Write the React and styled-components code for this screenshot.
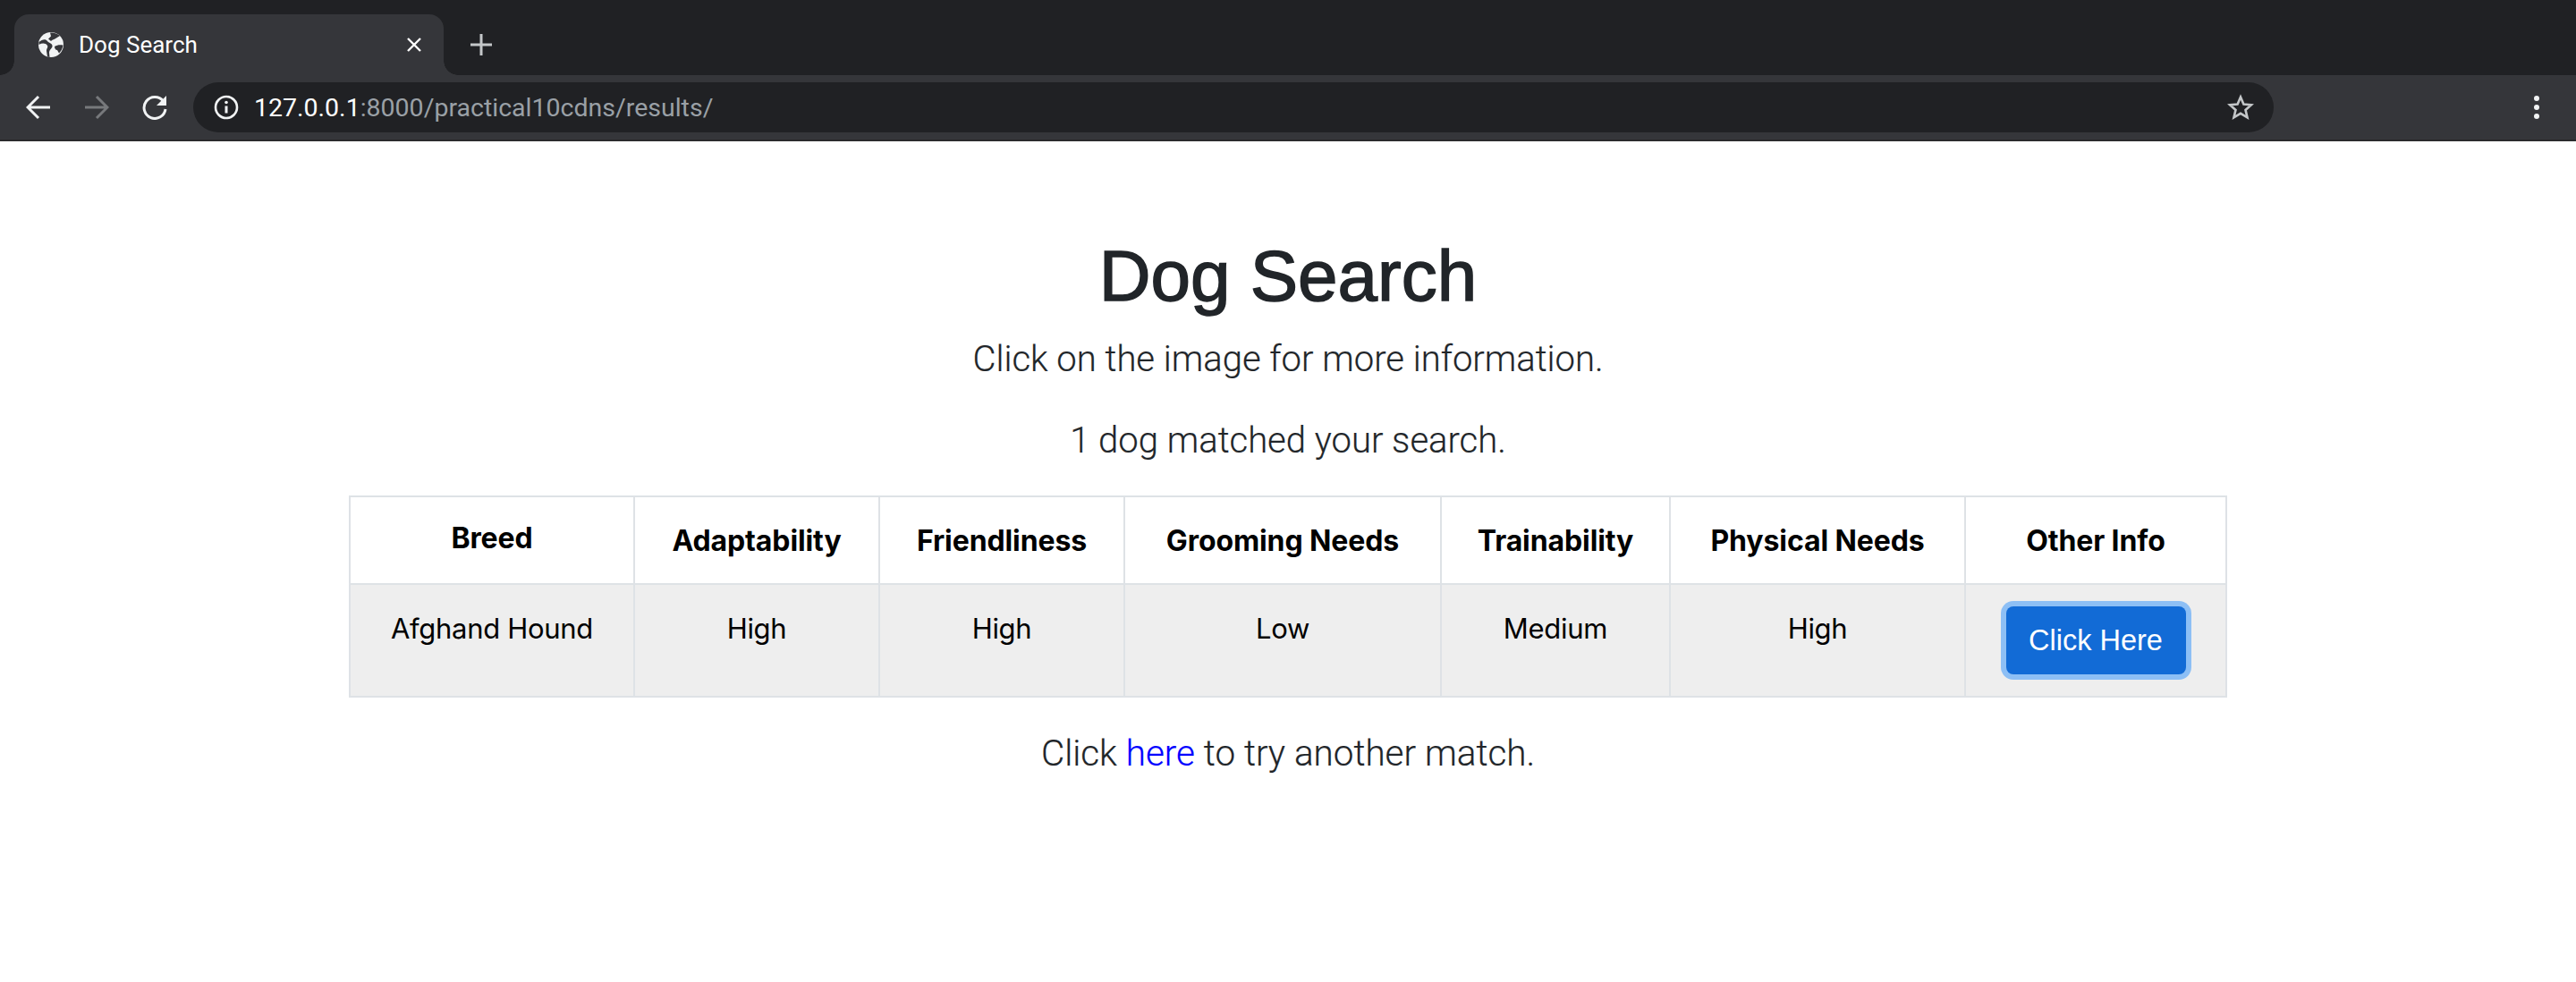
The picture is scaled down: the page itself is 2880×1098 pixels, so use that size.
import React from 'react';
import styled, { createGlobalStyle } from 'styled-components';

const GlobalStyle = createGlobalStyle`
    html, body {
        margin: 0;
        padding: 0;
        background: #fff;
        font-family: "Liberation Sans", Arial, sans-serif;
    }
`;

const columns = [
    { label: 'Breed', value: 'Afghand Hound', width: 318, raised: true },
    { label: 'Adaptability', value: 'High', width: 274 },
    { label: 'Friendliness', value: 'High', width: 274 },
    { label: 'Grooming Needs', value: 'Low', width: 354 },
    { label: 'Trainability', value: 'Medium', width: 256 },
    { label: 'Physical Needs', value: 'High', width: 330 },
    { label: 'Other Info', width: 292 },
];

const App = () => {
    return (
        <>
            <GlobalStyle />
            <Browser>
                <TabStrip>
                    <Tab>
                        <svg width="30" height="30" viewBox="0 0 30 30">
                            <circle cx="15" cy="15" r="14" fill="#f1f3f4" />
                            <path d="M1.5 12C5 9 9 8 11 11c1.5 2 5 2 5.500 5 .5 3-3.500 4-3.500 8l.5 5-2.500-.5-1-6.500c0-3 2-4 1-6-2-3-6-3-9.500-1zM14 1.500c4-.5 8 1 11 3.500l-4 2.500c-2 2-5 1.500-6 3.500l-3-2.500 3-3zM19 17c3-2 6-2 9.500-1.500-.5 3.500-2 6.500-4.500 9l-2-3.500c-2 0-3-2-3-4z" fill="#35363a" />
                        </svg>
                        <TabTitle>Dog Search</TabTitle>
                        <svg width="18" height="18" viewBox="0 0 18 18">
                            <path d="M2 2l14 14M16 2L2 16" stroke="#fff" strokeWidth="2.4" fill="none" />
                        </svg>
                    </Tab>
                    <NewTab>
                        <svg width="26" height="26" viewBox="0 0 26 26">
                            <path d="M13 1v24M1 13h24" stroke="#c4c7c9" strokeWidth="3" fill="none" />
                        </svg>
                    </NewTab>
                </TabStrip>
                <Toolbar>
                    <NavIcon>
                        <svg width="28" height="28" viewBox="0 0 28 28">
                            <path d="M27 14H3M14 2L2 14l12 12" stroke="#f1f3f4" strokeWidth="3" fill="none" />
                        </svg>
                    </NavIcon>
                    <NavIcon>
                        <svg width="28" height="28" viewBox="0 0 28 28">
                            <path d="M1 14h24M14 2l12 12-12 12" stroke="#77797c" strokeWidth="3" fill="none" />
                        </svg>
                    </NavIcon>
                    <NavIcon>
                        <svg width="28" height="28" viewBox="0 0 28 28">
                            <path d="M23.5 7A12 12 0 1 0 26 16" stroke="#f1f3f4" strokeWidth="3" fill="none" />
                            <path d="M27 1v11H16z" fill="#f1f3f4" />
                        </svg>
                    </NavIcon>
                    <AddressBar>
                        <svg width="28" height="28" viewBox="0 0 28 28">
                            <circle cx="14" cy="14" r="12" stroke="#f1f3f4" strokeWidth="2.6" fill="none" />
                            <path d="M14 12.5v8" stroke="#f1f3f4" strokeWidth="3" />
                            <circle cx="14" cy="8.5" r="1.8" fill="#f1f3f4" />
                        </svg>
                        <Url>
                            <UrlHost>127.0.0.1</UrlHost>:8000/practical10cdns/results/
                        </Url>
                        <svg width="30" height="30" viewBox="0 0 30 30">
                            <path d="M15 3.5l3.4 8 8.6.7-6.5 5.7 2 8.4-7.5-4.5-7.5 4.5 2-8.4L3 12.2l8.6-.7z" stroke="#c4c7c9" strokeWidth="2.6" fill="none" />
                        </svg>
                    </AddressBar>
                    <Kebab>
                        <Dot />
                        <Dot />
                        <Dot />
                    </Kebab>
                </Toolbar>
            </Browser>
            <Main>
                <Title>Dog Search</Title>
                <Lead>Click on the image for more information.</Lead>
                <Lead>1 dog matched your search.</Lead>
                <ResultTable>
                    <colgroup>
                        {columns.map(col => {
                            return <col key={col.label} width={col.width} />
                        })}
                    </colgroup>
                    <thead>
                        <tr>
                            {columns.map(col => {
                                return <HeadCell key={col.label} $raised={col.raised}>{col.label}</HeadCell>
                            })}
                        </tr>
                    </thead>
                    <tbody>
                        <tr>
                            {columns.map(col => {
                                return (
                                    <BodyCell key={col.label}>
                                        {col.value ? col.value : <InfoButton>Click Here</InfoButton>}
                                    </BodyCell>
                                )
                            })}
                        </tr>
                    </tbody>
                </ResultTable>
                <Footer>Click <MatchLink href="#">here</MatchLink> to try another match.</Footer>
            </Main>
        </>
    )
}

const Browser = styled.header`
    display: flex;
    flex-direction: column;
`;

const TabStrip = styled.div`
    height: 84px;
    box-sizing: border-box;
    padding: 16px 0 0 16px;
    background: #202124;
    display: flex;
`;

const Tab = styled.div`
    position: relative;
    width: 480px;
    height: 68px;
    box-sizing: border-box;
    padding: 0 24px 0 26px;
    background: #35363a;
    border-radius: 16px 16px 0 0;
    display: flex;
    align-items: center;
    color: #fff;
    &::before, &::after {
        content: "";
        position: absolute;
        bottom: 0;
        width: 16px;
        height: 16px;
    }
    &::before {
        left: -16px;
        background: radial-gradient(circle at 0 0, #202124 15.5px, #35363a 16px);
    }
    &::after {
        right: -16px;
        background: radial-gradient(circle at 100% 0, #202124 15.5px, #35363a 16px);
    }
`;

const TabTitle = styled.span`
    flex: 1;
    margin-left: 16px;
    font-family: Roboto, sans-serif;
    font-size: 26px;
    white-space: nowrap;
`;

const NewTab = styled.div`
    width: 84px;
    display: flex;
    align-items: center;
    justify-content: center;
`;

const Toolbar = styled.div`
    height: 74px;
    box-sizing: border-box;
    padding: 8px 0 8px 10px;
    background: #35363a;
    border-bottom: 2px solid #2a2a2c;
    display: flex;
    align-items: center;
`;

const NavIcon = styled.div`
    width: 65px;
    display: flex;
    justify-content: center;
`;

const AddressBar = styled.div`
    width: 2326px;
    height: 56px;
    margin-left: 11px;
    box-sizing: border-box;
    padding: 0 22px 0 23px;
    background: #202124;
    border-radius: 28px;
    display: flex;
    align-items: center;
`;

const Url = styled.div`
    flex: 1;
    margin-left: 17px;
    color: #9aa0a6;
    font-family: Roboto, sans-serif;
    font-size: 28.5px;
`;

const UrlHost = styled.span`
    color: #fff;
`;

const Kebab = styled.div`
    margin-left: 291px;
    display: flex;
    flex-direction: column;
    gap: 4px;
`;

const Dot = styled.span`
    width: 6px;
    height: 6px;
    border-radius: 50%;
    background: #f1f3f4;
`;

const Main = styled.main`
    padding-top: 103px;
    display: flex;
    flex-direction: column;
    align-items: center;
`;

const Title = styled.h1`
    margin: 0 0 15px;
    color: #212529;
    font-size: 80px;
    font-weight: 400;
    line-height: 96px;
    -webkit-text-stroke: 1.5px #212529;
`;

const Lead = styled.p`
    margin: 0 0 31px;
    color: #212529;
    font-family: Roboto, sans-serif;
    font-size: 40px;
    font-weight: 300;
    line-height: 60px;
    -webkit-text-stroke: 0.2px #212529;
`;

const ResultTable = styled.table`
    width: 2098px;
    table-layout: fixed;
    border-collapse: collapse;
    font-family: Inter, sans-serif;
    color: #000;
`;

const HeadCell = styled.th`
    height: 98px;
    box-sizing: border-box;
    padding: ${props => props.$raised ? '0 0 6px' : '0'};
    border: 2px solid #dee2e6;
    font-size: 32px;
    font-weight: 700;
    letter-spacing: -0.1px;
    text-align: center;
`;

const BodyCell = styled.td`
    height: 126px;
    box-sizing: border-box;
    padding: 24px 0 0;
    border: 2px solid #dee2e6;
    background: #eee;
    font-size: 31px;
    letter-spacing: -0.3px;
    line-height: 50px;
    text-align: center;
    vertical-align: top;
`;

const InfoButton = styled.button`
    display: block;
    width: 201px;
    height: 76px;
    margin: 0 auto;
    padding: 0;
    border: 0;
    border-radius: 8px;
    background: #126bd6;
    box-shadow: 0 0 0 6px #8dbff5;
    color: #fff;
    font-family: "Liberation Sans", Arial, sans-serif;
    font-size: 32.5px;
`;

const Footer = styled.p`
    margin: 33px 0 0;
    color: #212529;
    font-family: Roboto, sans-serif;
    font-size: 40.4px;
    font-weight: 300;
    line-height: 60px;
    -webkit-text-stroke: 0.2px #212529;
`;

const MatchLink = styled.a`
    color: #0000ff;
    text-decoration: none;
    -webkit-text-stroke: 0.2px #0000ff;
`;

export default App;
